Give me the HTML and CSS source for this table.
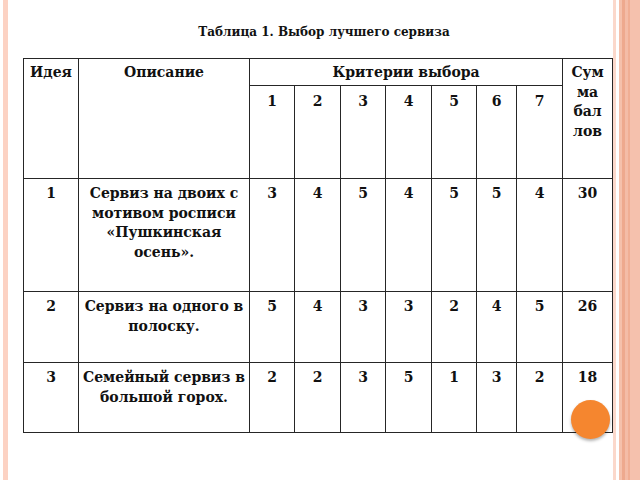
FILE: index.html
```html
<!DOCTYPE html>
<html lang="ru">
<head>
<meta charset="utf-8">
<title>Таблица 1. Выбор лучшего сервиза</title>
<link rel="stylesheet" href="styles.css">
</head>
<body>
<main class="slide">
  <h1 class="caption">Таблица 1. Выбор лучшего сервиза</h1>
  <table class="grid">
    <colgroup>
      <col class="c-idea">
      <col class="c-desc">
      <col class="c-k45">
      <col class="c-k46">
      <col class="c-k45">
      <col class="c-k46">
      <col class="c-k45">
      <col class="c-k40">
      <col class="c-k46">
      <col class="c-sum">
    </colgroup>
    <thead>
      <tr class="h1">
        <th rowspan="2">Идея</th>
        <th rowspan="2">Описание</th>
        <th colspan="7">Критерии выбора</th>
        <th rowspan="2">Сум<br>ма<br>бал<br>лов</th>
      </tr>
      <tr class="h2">
        <th>1</th><th>2</th><th>3</th><th>4</th><th>5</th><th>6</th><th>7</th>
      </tr>
    </thead>
    <tbody>
      <tr class="r1">
        <td>1</td>
        <td>Сервиз на двоих с мотивом росписи «Пушкинская осень».</td>
        <td>3</td><td>4</td><td>5</td><td>4</td><td>5</td><td>5</td><td>4</td>
        <td>30</td>
      </tr>
      <tr class="r2">
        <td>2</td>
        <td>Сервиз на одного в полоску.</td>
        <td>5</td><td>4</td><td>3</td><td>3</td><td>2</td><td>4</td><td>5</td>
        <td>26</td>
      </tr>
      <tr class="r3">
        <td>3</td>
        <td>Семейный сервиз в большой горох.</td>
        <td>2</td><td>2</td><td>3</td><td>5</td><td>1</td><td>3</td><td>2</td>
        <td>18</td>
      </tr>
    </tbody>
  </table>
  <span class="dot" aria-hidden="true"></span>
</main>
</body>
</html>
```
FILE: styles.css
```css
html, body {
  margin: 0;
  padding: 0;
}

body {
  width: 640px;
  height: 480px;
  overflow: hidden;
  background:
    linear-gradient(to right,
      transparent 0 3px,
      #fcd2c3 3px 8px,
      transparent 8px 613px,
      #fbd8cb 613px 616px,
      #ffffff 616px 619px,
      #f5c0ab 619px 622px,
      #eea98e 622px 625px,
      #f4bca7 625px 628px,
      #f0ae94 628px 630px,
      #f5c1ad 630px 640px),
    #ffffff;
  font-family: "DejaVu Serif", "Liberation Serif", serif;
  color: #111;
}

.slide {
  position: relative;
  width: 640px;
  height: 480px;
  box-sizing: border-box;
  padding: 24px 0 0 23px;
  display: flex;
  flex-direction: column;
  align-items: flex-start;
}

.caption {
  margin: 0 0 18px -19px;
  width: 640px;
  text-align: center;
  font-size: 12px;
  line-height: 16px;
  font-weight: bold;
}

.grid {
  border-collapse: collapse;
  table-layout: fixed;
  width: 590px;
  font-size: 14px;
  line-height: 19.5px;
  font-weight: bold;
}

.c-idea { width: 55px; }
.c-desc { width: 171px; }
.c-k45 { width: 45px; }
.c-k46 { width: 46px; }
.c-k40 { width: 40px; }
.c-sum { width: 50px; }

.grid th,
.grid td {
  border: 1px solid #262626;
  padding: 5px 1px 0;
  text-align: center;
  vertical-align: top;
  font-weight: bold;
}

.grid th {
  padding-top: 4px;
}

.grid .h2 th {
  padding-top: 6px;
}

.h1 { height: 27px; }
.h2 { height: 93px; }
.r1 { height: 113px; }
.r2 { height: 71px; }
.r3 { height: 70px; }

.dot {
  position: absolute;
  left: 571px;
  top: 400px;
  width: 39px;
  height: 39px;
  border-radius: 50%;
  background: #f5862f;
  box-shadow: 0 2px 3px rgba(0, 0, 0, 0.3);
}
```
